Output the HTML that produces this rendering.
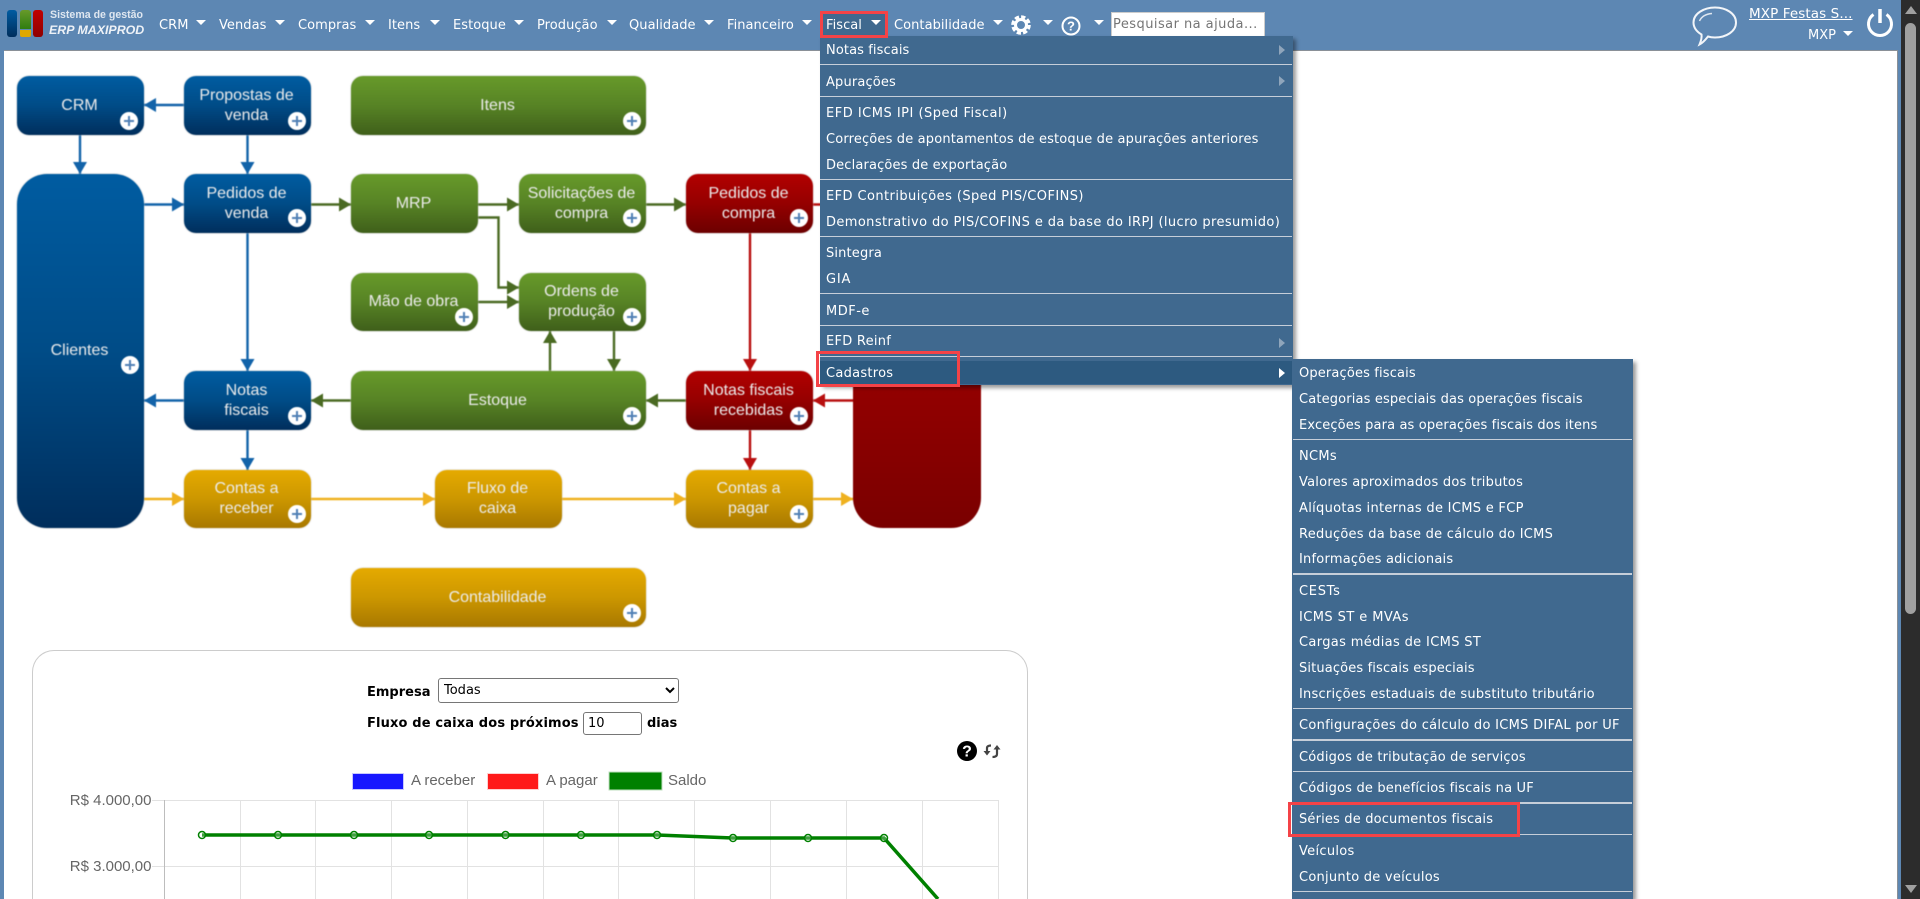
<!DOCTYPE html>
<html lang="pt"><head><meta charset="utf-8"><title>ERP MAXIPROD</title>
<style>
html,body{margin:0;padding:0;width:1920px;height:899px;overflow:hidden;background:#fff}
*{box-sizing:border-box}
body{position:relative;font-family:"DejaVu Sans","Liberation Sans",sans-serif;font-size:13px;color:#fff}
.a{position:absolute}
#bar{position:absolute;left:0;top:0;width:1901px;height:51px;background:#5d87b3;border-bottom:1px solid #8a9097}
#ls{position:absolute;left:0;top:50px;width:4px;height:849px;background:#5d87b3}
#rs{position:absolute;left:1897px;top:50px;width:4px;height:849px;background:#5d87b3;border-left:1px solid #8a9097}
#sb{position:absolute;left:1901px;top:0;width:19px;height:899px;background:#2c2c2c}
.n{position:absolute;top:16px;line-height:20px;white-space:nowrap;font-size:13px;letter-spacing:.05px}
.t{position:absolute;top:20px;width:0;height:0;border-left:5px solid transparent;border-right:5px solid transparent;border-top:5px solid #fff}
.m{position:absolute;background:#40698f;box-shadow:3px 3px 4px rgba(0,0,0,.4)}
.i{position:absolute;line-height:20px;white-space:nowrap;font-size:13px;color:#fff}
.s{position:absolute;height:1px;background:#c6ced9}
.s2{height:2px}
.c{position:absolute;width:0;height:0;border-top:5px solid transparent;border-bottom:5px solid transparent;border-left:6px solid #8fa5bb}
.rb{position:absolute;border:3px solid #f44347}
#dg{position:absolute;left:0;top:0;width:1100px;height:640px;filter:blur(.4px)}
.b{position:absolute;border-radius:12px;display:flex;align-items:center;justify-content:center;text-align:center;font-family:"Liberation Sans",sans-serif;font-size:16px;line-height:20px;color:#ececec;padding-right:2px;box-shadow:0 0 0 1px rgba(200,200,200,.35)}
.bl{background:linear-gradient(#005ca1 0%,#004c87 50%,#002e5c 100%)}
.gr{background:linear-gradient(#679a2a 0%,#578325 50%,#3f5f1a 100%)}
.rd{background:linear-gradient(#b20000 0%,#950000 50%,#6c0000 100%)}
.ye{background:linear-gradient(#e5aa00 0%,#cc9700 50%,#a87800 100%)}
.p{position:absolute;width:18px;height:18px;margin:-9px 0 0 -9px;border-radius:50%;background:#fff}
.p:before{content:"";position:absolute;left:4px;top:8px;width:10px;height:2px;background:#4f7fb5}
.p:after{content:"";position:absolute;left:8px;top:4px;width:2px;height:10px;background:#4f7fb5}
#card{position:absolute;left:32px;top:650px;width:996px;height:249px;border:1px solid #ccc;border-bottom:0;border-radius:22px 22px 0 0;background:#fff}
.lb{position:absolute;color:#000;font-weight:bold;font-size:13px;line-height:20px;white-space:nowrap}
</style></head><body>

<div id="dg">
<svg class="a" style="left:0;top:0" width="1100" height="640" viewBox="0 0 1100 640" fill="none">
<defs>
<marker id="mb" markerUnits="userSpaceOnUse" markerWidth="12" markerHeight="14" refX="12" refY="7" orient="auto"><path d="M0 0L12 7L0 14z" fill="#1263a9"/></marker>
<marker id="mg" markerUnits="userSpaceOnUse" markerWidth="12" markerHeight="14" refX="12" refY="7" orient="auto"><path d="M0 0L12 7L0 14z" fill="#4a6a22"/></marker>
<marker id="mr" markerUnits="userSpaceOnUse" markerWidth="12" markerHeight="14" refX="12" refY="7" orient="auto"><path d="M0 0L12 7L0 14z" fill="#b80f0f"/></marker>
<marker id="my" markerUnits="userSpaceOnUse" markerWidth="12" markerHeight="14" refX="12" refY="7" orient="auto"><path d="M0 0L12 7L0 14z" fill="#efb11f"/></marker>
</defs>
<g stroke="#1263a9" stroke-width="2.4" marker-end="url(#mb)">
<path d="M184 105H144"/><path d="M80 135V174"/><path d="M247.500 135V174"/><path d="M144 204.500H184"/><path d="M247.500 233V371"/><path d="M184 400.500H144"/><path d="M247.500 430V470"/>
</g>
<g stroke="#4a6a22" stroke-width="2.4" marker-end="url(#mg)">
<path d="M311 204.500H351"/><path d="M478 204.500H519"/><path d="M478 217.500H498.500V287.500H519"/><path d="M478 302H519"/><path d="M550 371V331"/><path d="M614 331V371"/><path d="M351 400.500H311"/><path d="M686 400.500H646"/><path d="M646 204.500H686"/>
</g>
<g stroke="#b80f0f" stroke-width="2.4" marker-end="url(#mr)">
<path d="M750 233V371"/><path d="M750 430V470"/><path d="M853 400.500H813"/><path d="M813 204.500H853"/>
</g>
<g stroke="#efb11f" stroke-width="2.4" marker-end="url(#my)">
<path d="M144 499H184"/><path d="M311 499H435"/><path d="M562 499H686"/><path d="M813 499H853"/>
</g>
</svg>
<div class="b bl" style="left:17px;top:76px;width:127px;height:59px">CRM</div>
<div class="b bl" style="left:184px;top:76px;width:127px;height:59px">Propostas de<br>venda</div>
<div class="b gr" style="left:351px;top:76px;width:295px;height:59px">Itens</div>
<div class="b bl" style="left:17px;top:174px;width:127px;height:354px;border-radius:30px">Clientes</div>
<div class="b bl" style="left:184px;top:174px;width:127px;height:59px">Pedidos de<br>venda</div>
<div class="b gr" style="left:351px;top:174px;width:127px;height:59px">MRP</div>
<div class="b gr" style="left:519px;top:174px;width:127px;height:59px">Solicitações de<br>compra</div>
<div class="b rd" style="left:686px;top:174px;width:127px;height:59px">Pedidos de<br>compra</div>
<div class="b gr" style="left:351px;top:273px;width:127px;height:58px">Mão de obra</div>
<div class="b gr" style="left:519px;top:273px;width:127px;height:58px">Ordens de<br>produção</div>
<div class="b bl" style="left:184px;top:371px;width:127px;height:59px">Notas<br>fiscais</div>
<div class="b gr" style="left:351px;top:371px;width:295px;height:59px">Estoque</div>
<div class="b rd" style="left:686px;top:371px;width:127px;height:59px">Notas fiscais<br>recebidas</div>
<div class="b ye" style="left:184px;top:470px;width:127px;height:58px">Contas a<br>receber</div>
<div class="b ye" style="left:435px;top:470px;width:127px;height:58px">Fluxo de<br>caixa</div>
<div class="b ye" style="left:686px;top:470px;width:127px;height:58px">Contas a<br>pagar</div>
<div class="a" style="left:853px;top:174px;width:128px;height:354px;border-radius:30px;background:linear-gradient(#b00000,#960000 55%,#7a0000)"></div>
<div class="b ye" style="left:351px;top:568px;width:295px;height:59px">Contabilidade</div>
<i class="p" style="left:129px;top:121px"></i><i class="p" style="left:297px;top:121px"></i><i class="p" style="left:632px;top:121px"></i>
<i class="p" style="left:130px;top:365px"></i><i class="p" style="left:297px;top:218px"></i><i class="p" style="left:632px;top:218px"></i><i class="p" style="left:799px;top:218px"></i>
<i class="p" style="left:464px;top:317px"></i><i class="p" style="left:632px;top:317px"></i><i class="p" style="left:297px;top:416px"></i><i class="p" style="left:632px;top:416px"></i><i class="p" style="left:799px;top:416px"></i>
<i class="p" style="left:297px;top:514px"></i><i class="p" style="left:799px;top:514px"></i><i class="p" style="left:632px;top:613px"></i>
</div>

<div id="card"></div>
<div class="lb" style="left:367px;top:683px">Empresa</div>
<select class="a" style="left:438px;top:678px;width:241px;height:25px;font:13px 'DejaVu Sans',sans-serif;background:#fff;color:#000;border:1px solid #767676;border-radius:3px;padding-left:1px"><option>Todas</option></select>
<div class="lb" style="left:367px;top:714px;letter-spacing:.14px">Fluxo de caixa dos próximos</div>
<div class="a" style="left:583px;top:712px;width:59px;height:23px;border:1px solid #767676;border-radius:3px;color:#000;font-size:13px;line-height:21px;padding-left:4px">10</div>
<div class="lb" style="left:647px;top:714px">dias</div>
<svg class="a" style="left:950px;top:738px" width="56" height="26" viewBox="0 0 56 26">
<ellipse cx="17" cy="13" rx="10" ry="10" fill="#000"/>
<text x="17" y="18.500" text-anchor="middle" font-family="Liberation Sans,sans-serif" font-weight="bold" font-size="16" fill="#fff">?</text>
<path d="M37 14V10Q37 7.500 41 7.500" stroke="#444" stroke-width="2.200" fill="none"/><path d="M33.500 13H40.500L37 17.500z" fill="#444"/>
<path d="M47 11V16Q47 19 42.500 19" stroke="#444" stroke-width="2.200" fill="none"/><path d="M43.500 11.500H50.500L47 7z" fill="#444"/>
</svg>

<svg class="a" style="left:0;top:760px" width="1040" height="139" viewBox="0 760 1040 139">
<g font-family="Liberation Sans,sans-serif" font-size="15" fill="#666">
<text x="411" y="785">A receber</text><text x="546" y="785">A pagar</text><text x="668" y="785">Saldo</text>
<text x="151.500" y="805" text-anchor="end">R$ 4.000,00</text><text x="151.500" y="871" text-anchor="end">R$ 3.000,00</text>
</g>
<rect x="352.500" y="773.500" width="51" height="16" fill="#1717ff" stroke="#c8c8ff"/>
<rect x="487.500" y="773.500" width="51" height="16" fill="#ff1a1a" stroke="#ffd0d0"/>
<rect x="609" y="772" width="53" height="18" fill="#008000" stroke="#bfdfbf"/>
<g stroke="#e2e2e2" stroke-width="1">
<path d="M152 800.500H998.500M152 866.500H998.500"/>
<path d="M240.500 800V899M315.500 800V899M391.500 800V899M467.500 800V899M543.500 800V899M618.500 800V899M694.500 800V899M770.500 800V899M846.500 800V899M922.500 800V899M998.500 800V899"/>
</g>
<path d="M164.500 800V899" stroke="#bdbdbd"/>
<path d="M202 835H657L733 838H884L938 899" stroke="#008000" stroke-width="3.500" fill="none"/>
<g fill="#fff" fill-opacity=".25" stroke="#008000" stroke-width="1.500">
<circle cx="202" cy="835" r="3.500"/><circle cx="278" cy="835" r="3.500"/><circle cx="354" cy="835" r="3.500"/><circle cx="429" cy="835" r="3.500"/><circle cx="505.500" cy="835" r="3.500"/><circle cx="581" cy="835" r="3.500"/><circle cx="657" cy="835" r="3.500"/><circle cx="733" cy="838" r="3.500"/><circle cx="808" cy="838" r="3.500"/><circle cx="884" cy="838" r="3.500"/>
</g>
</svg>

<div id="bar"></div><div id="ls"></div><div id="rs"></div>
<div id="sb">
<div class="a" style="left:4px;top:6px;width:0;height:0;border-left:6px solid transparent;border-right:6px solid transparent;border-bottom:8px solid #a0a0a0"></div>
<div class="a" style="left:4px;top:23px;width:11px;height:591px;background:#a0a0a0;border-radius:6px"></div>
<div class="a" style="left:4px;top:885px;width:0;height:0;border-left:6px solid transparent;border-right:6px solid transparent;border-top:8px solid #a0a0a0"></div>
</div>

<div class="a" style="left:7px;top:10px;width:10px;height:27px;border-radius:3px;background:linear-gradient(#005ca1,#002e5c)"></div>
<div class="a" style="left:20px;top:10px;width:11px;height:19px;border-radius:3px 3px 0 0;background:linear-gradient(#679a2a,#2f7d10)"></div>
<div class="a" style="left:20px;top:30px;width:11px;height:7px;border-radius:0 0 2px 2px;background:#e0a800"></div>
<div class="a" style="left:33px;top:10px;width:10px;height:27px;border-radius:3px;background:linear-gradient(#c00000,#8e0000)"></div>
<div class="a" style="left:50px;top:7px;font:bold 10.600px/16px 'Liberation Sans',sans-serif;color:#dfe7f0;white-space:nowrap">Sistema de gestão</div>
<div class="a" style="left:49px;top:22px;font:italic bold 12.400px/16px 'Liberation Sans',sans-serif;color:#eef2f7;white-space:nowrap">ERP MAXIPROD</div>

<div class="n" style="left:159px">CRM</div><i class="t" style="left:196px"></i>
<div class="n" style="left:219px">Vendas</div><i class="t" style="left:275px"></i>
<div class="n" style="left:298px">Compras</div><i class="t" style="left:365px"></i>
<div class="n" style="left:388px">Itens</div><i class="t" style="left:430px"></i>
<div class="n" style="left:453px">Estoque</div><i class="t" style="left:514px"></i>
<div class="n" style="left:537px">Produção</div><i class="t" style="left:607px"></i>
<div class="n" style="left:629px">Qualidade</div><i class="t" style="left:704px"></i>
<div class="n" style="left:727px">Financeiro</div><i class="t" style="left:802px"></i>
<div class="a" style="left:820px;top:11px;width:68px;height:26px;background:#40698f"></div>
<div class="n" style="left:826px">Fiscal</div><i class="t" style="left:871px"></i>
<div class="n" style="left:894px">Contabilidade</div><i class="t" style="left:993px"></i>
<svg class="a" style="left:1010px;top:14px" width="22" height="22" viewBox="0 0 22 22" fill="none"><circle cx="11" cy="11" r="5.500" stroke="#fff" stroke-width="3"/><circle cx="11" cy="11" r="8.300" stroke="#fff" stroke-width="3" stroke-dasharray="4.300 2.200"/></svg>
<i class="t" style="left:1043px"></i>
<svg class="a" style="left:1060px;top:15px" width="22" height="22" viewBox="0 0 22 22"><circle cx="11" cy="11" r="8.500" fill="none" stroke="#fff" stroke-width="2"/><text x="11" y="15.500" text-anchor="middle" font-family="Liberation Sans,sans-serif" font-size="13" font-weight="bold" fill="#fff">?</text></svg>
<i class="t" style="left:1094px"></i>
<div class="a" style="left:1111px;top:12px;width:154px;height:26px;background:#fff;border:1px solid #ccc;color:#757575;font-size:13px;line-height:24px;padding-left:1px;white-space:nowrap;overflow:hidden;letter-spacing:.45px">Pesquisar na ajuda...</div>

<svg class="a" style="left:1690px;top:4px" width="50" height="44" viewBox="0 0 50 44" fill="none"><path d="M25 3.500C36 3.500 46 9.500 46 18.500C46 27.500 36 33.500 25 33.500C22.500 33.500 20 33.200 18 32.500C16 35 13.500 38.500 9.500 40.500C11 37 12 33.500 11.500 30.500C6.500 27.500 3.500 23.500 3.500 18.500C3.500 9.500 14 3.500 25 3.500Z" stroke="#f2f5f9" stroke-width="2"/><path d="M9.500 17C11.500 12.500 16 10 22 9.500" stroke="#dfe7f0" stroke-width="1.500"/></svg>
<div class="a" style="left:1749px;top:5px;line-height:19px;font-size:13.500px;letter-spacing:.1px;text-decoration:underline;white-space:nowrap">MXP Festas S...</div>
<div class="a" style="left:1808px;top:26px;line-height:20px;font-size:13px;white-space:nowrap">MXP</div><i class="t" style="left:1843px;top:31px"></i>
<svg class="a" style="left:1864px;top:6px" width="32" height="32" viewBox="0 0 32 32" fill="none"><path d="M9.500 8.500A11.500 11.500 0 1 0 22.500 8.500" stroke="#fff" stroke-width="3"/><path d="M16 3V17" stroke="#fff" stroke-width="3.500"/></svg>

<div class="m" style="left:820px;top:36px;width:473px;height:349px"></div>
<div class="a" style="left:820px;top:361px;width:472px;height:23px;background:#2d5a80"></div>
<div class="i" style="left:826px;top:41px;letter-spacing:.1px">Notas fiscais</div><i class="c" style="left:1279px;top:45px"></i>
<div class="s" style="left:820px;top:64px;width:472px"></div>
<div class="i" style="left:826px;top:73px;letter-spacing:.15px">Apurações</div><i class="c" style="left:1279px;top:76px"></i>
<div class="s" style="left:820px;top:96px;width:472px"></div>
<div class="i" style="left:826px;top:104px;letter-spacing:.5px">EFD ICMS IPI (Sped Fiscal)</div>
<div class="i" style="left:826px;top:130px;letter-spacing:.16px">Correções de apontamentos de estoque de apurações anteriores</div>
<div class="i" style="left:826px;top:156px;letter-spacing:.15px">Declarações de exportação</div>
<div class="s" style="left:820px;top:179px;width:472px"></div>
<div class="i" style="left:826px;top:187px;letter-spacing:.42px">EFD Contribuições (Sped PIS/COFINS)</div>
<div class="i" style="left:826px;top:213px;letter-spacing:.39px">Demonstrativo do PIS/COFINS e da base do IRPJ (lucro presumido)</div>
<div class="s" style="left:820px;top:236px;width:472px"></div>
<div class="i" style="left:826px;top:244px;letter-spacing:.15px">Sintegra</div>
<div class="i" style="left:826px;top:270px;letter-spacing:.8px">GIA</div>
<div class="s" style="left:820px;top:293px;width:472px"></div>
<div class="i" style="left:826px;top:302px;letter-spacing:.5px">MDF-e</div>
<div class="s" style="left:820px;top:325px;width:472px"></div>
<div class="i" style="left:826px;top:332px;letter-spacing:.27px">EFD Reinf</div><i class="c" style="left:1279px;top:338px"></i>
<div class="s" style="left:820px;top:356px;width:472px"></div>
<div class="i" style="left:826px;top:364px;letter-spacing:.27px">Cadastros</div><i class="c" style="left:1279px;top:368px;border-left-color:#fff"></i>

<div class="m" style="left:1292px;top:359px;width:341px;height:540px"></div>
<div class="i" style="left:1299px;top:364px;letter-spacing:.15px">Operações fiscais</div>
<div class="i" style="left:1299px;top:390px;letter-spacing:.15px">Categorias especiais das operações fiscais</div>
<div class="i" style="left:1299px;top:416px;letter-spacing:.14px">Exceções para as operações fiscais dos itens</div>
<div class="s" style="left:1293px;top:439px;width:339px"></div>
<div class="i" style="left:1299px;top:447px;letter-spacing:.3px">NCMs</div>
<div class="i" style="left:1299px;top:473px;letter-spacing:.23px">Valores aproximados dos tributos</div>
<div class="i" style="left:1299px;top:499px;letter-spacing:.3px">Alíquotas internas de ICMS e FCP</div>
<div class="i" style="left:1299px;top:525px;letter-spacing:.25px">Reduções da base de cálculo do ICMS</div>
<div class="i" style="left:1299px;top:550px;letter-spacing:.22px">Informações adicionais</div>
<div class="s s2" style="left:1293px;top:573px;width:339px"></div>
<div class="i" style="left:1299px;top:582px;letter-spacing:.7px">CESTs</div>
<div class="i" style="left:1299px;top:608px;letter-spacing:.43px">ICMS ST e MVAs</div>
<div class="i" style="left:1299px;top:633px;letter-spacing:.35px">Cargas médias de ICMS ST</div>
<div class="i" style="left:1299px;top:659px;letter-spacing:.14px">Situações fiscais especiais</div>
<div class="i" style="left:1299px;top:685px;letter-spacing:.22px">Inscrições estaduais de substituto tributário</div>
<div class="s" style="left:1293px;top:708px;width:339px"></div>
<div class="i" style="left:1299px;top:716px;letter-spacing:.3px">Configurações do cálculo do ICMS DIFAL por UF</div>
<div class="s s2" style="left:1293px;top:739px;width:339px"></div>
<div class="i" style="left:1299px;top:748px;letter-spacing:.18px">Códigos de tributação de serviços</div>
<div class="s" style="left:1293px;top:771px;width:339px"></div>
<div class="i" style="left:1299px;top:779px;letter-spacing:.18px">Códigos de benefícios fiscais na UF</div>
<div class="s s2" style="left:1293px;top:802px;width:339px"></div>
<div class="i" style="left:1299px;top:810px;letter-spacing:.17px">Séries de documentos fiscais</div>
<div class="s" style="left:1293px;top:834px;width:339px"></div>
<div class="i" style="left:1299px;top:842px;letter-spacing:.3px">Veículos</div>
<div class="i" style="left:1299px;top:868px;letter-spacing:.25px">Conjunto de veículos</div>
<div class="s" style="left:1293px;top:891px;width:339px"></div>

<div class="rb" style="left:820px;top:11px;width:68px;height:27px"></div>
<div class="rb" style="left:816px;top:351px;width:144px;height:36px"></div>
<div class="rb" style="left:1288px;top:802px;width:232px;height:35px"></div>
</body></html>
